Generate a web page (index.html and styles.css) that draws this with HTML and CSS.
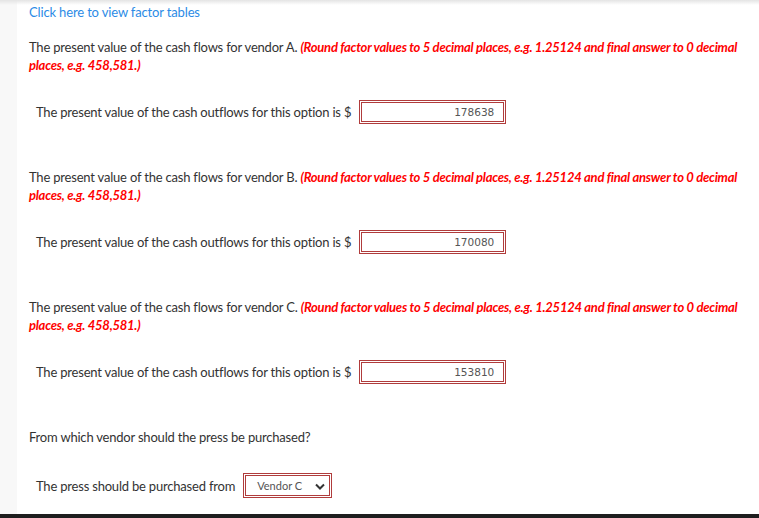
FILE: index.html
```html
<!DOCTYPE html>
<html>
  <head>
    <title>Factor tables</title>
    <link rel="stylesheet" href="styles.css">
  </head>
  <body>
    <div class="page">
      <div class="gutter"></div>
      <div class="content">
        <a class="factor-link" href="#">Click here to view factor tables</a>

        <!-- Vendor A -->
        <p class="question">The present value of the cash flows for vendor A. <em class="hint">(Round factor values to 5 decimal places, e.g. 1.25124 and final answer to 0 decimal places, e.g. 458,581.)</em></p>
        <div class="answer-row">
          <span>The present value of the cash outflows for this option is $</span>
          <span class="field"><input type="text" value="178638"></span>
        </div>

        <!-- Vendor B -->
        <p class="question">The present value of the cash flows for vendor B. <em class="hint">(Round factor values to 5 decimal places, e.g. 1.25124 and final answer to 0 decimal places, e.g. 458,581.)</em></p>
        <div class="answer-row">
          <span>The present value of the cash outflows for this option is $</span>
          <span class="field"><input type="text" value="170080"></span>
        </div>

        <!-- Vendor C -->
        <p class="question">The present value of the cash flows for vendor C. <em class="hint">(Round factor values to 5 decimal places, e.g. 1.25124 and final answer to 0 decimal places, e.g. 458,581.)</em></p>
        <div class="answer-row">
          <span>The present value of the cash outflows for this option is $</span>
          <span class="field"><input type="text" value="153810"></span>
        </div>

        <p class="question last">From which vendor should the press be purchased?</p>
        <div class="answer-row vendor-row">
          <span>The press should be purchased from</span>
          <span class="field select-field">
            <span class="select-value">Vendor C</span>
            <svg width="10" height="7" viewBox="0 0 10 7"><path d="M1 1.5 L5 5.5 L9 1.5" fill="none" stroke="#333" stroke-width="2"/></svg>
          </span>
        </div>
      </div>
    </div>
    <div class="footer-bar"></div>
  </body>
</html>
```

FILE: styles.css
```css
html, body {
  margin: 0;
  height: 100%;
  overflow: hidden;
}

body {
  font-family: Lato, "Liberation Sans", sans-serif;
  font-size: 13px;
  color: #333;
  background: #fff;
  position: relative;
}

body::before {
  content: "";
  position: absolute;
  left: 0;
  right: 0;
  top: 0;
  height: 5px;
  background: linear-gradient(#e4e4e4, rgba(255,255,255,0));
}

.page {
  display: flex;
  height: 514px;
}

.gutter {
  width: 17px;
  background: #f8f8f8;
  flex-shrink: 0;
}

.content {
  flex: 1;
  padding: 3px 8px 0 12px;
  line-height: 18px;
  letter-spacing: -0.2px;
}

.factor-link {
  color: #2b8be6;
  text-decoration: none;
  display: block;
  letter-spacing: -0.15px;
}

.question {
  margin: 17px 0 0;
}

.question.last {
  margin-top: 50px;
}

.hint {
  color: #ff0000;
  font-weight: bold;
  letter-spacing: -0.25px;
}

.answer-row {
  display: flex;
  align-items: center;
  gap: 8px;
  margin: 25px 0 0 7px;
  height: 25px;
}

.answer-row + .question {
  margin-top: 44px;
}

.vendor-row {
  margin-top: 27px;
}

.field {
  display: flex;
  border: 1px solid #b03c3c;
  padding: 1px;
}

.field input {
  width: 132px;
  height: 17px;
  border: 1px solid #b03c3c;
  padding: 1px 9px 0 0;
  margin: 0;
  text-align: right;
  font-family: "DejaVu Sans", sans-serif;
  font-size: 10.5px;
  color: #555;
  letter-spacing: 0;
  outline: none;
}

.select-field {
  align-items: center;
  justify-content: space-between;
  padding: 1px 6px 0 13px;
  box-shadow: inset 0 0 0 1px #fff, inset 0 0 0 2px #b03c3c;
  box-sizing: border-box;
  width: 89px;
  height: 25px;
}

.select-value {
  font-size: 11px;
  color: #555;
  letter-spacing: 0;
}

.footer-bar {
  height: 4px;
  background: #1e1e1e;
}
```
